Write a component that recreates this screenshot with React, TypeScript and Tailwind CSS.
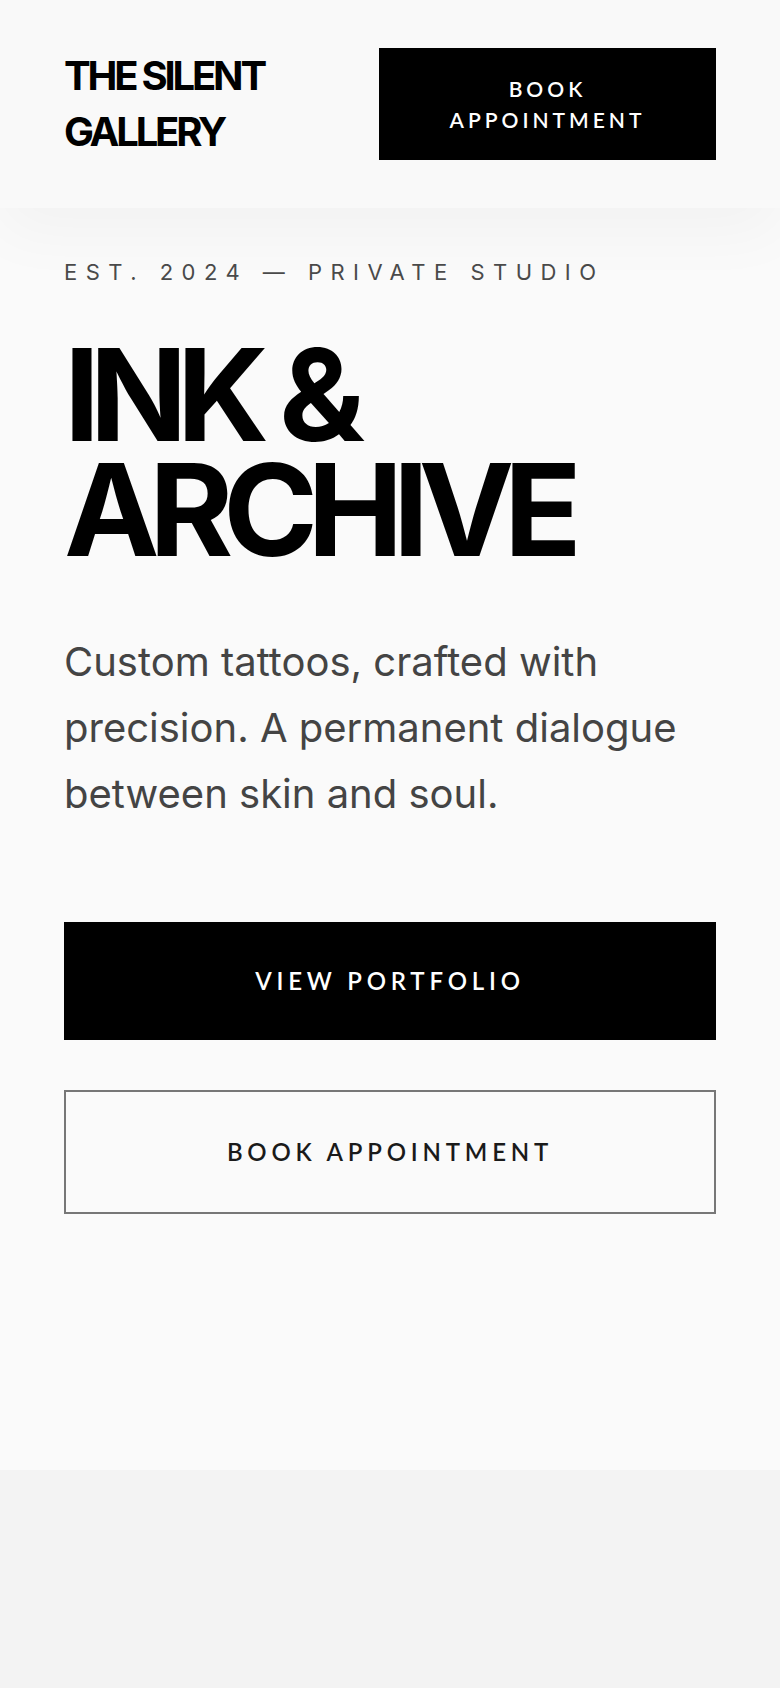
import React from 'react';

const sans = "font-['Inter','Noto_Sans',sans-serif]";
const btn = "font-['Lato','Open_Sans',sans-serif]";

const Header: React.FC = () => {
  return (
    <header className="relative z-10 bg-[#f9f9f9] px-16 py-12 flex items-center justify-between gap-8 shadow-[0_24px_60px_rgba(0,0,0,0.035)]">
      <div className={`${sans} text-[40px] leading-[56px] font-bold tracking-[-0.08em] text-black`}>
        <span className="block">THE SILENT</span>
        <span className="block">GALLERY</span>
      </div>
      <button
        className={`${btn} w-[337px] shrink-0 bg-black text-white text-[21px] leading-[31px] font-semibold tracking-[0.19em] py-[25px] text-center`}
      >
        BOOK
        <br />
        APPOINTMENT
      </button>
    </header>
  );
};

const Hero: React.FC = () => {
  return (
    <section className="bg-[#fafafa] px-16 pt-12 pb-[256px]">
      <p className={`${sans} text-[22px] leading-[33px] tracking-[0.385em] text-[#4a4a4a]`}>
        EST. 2024 — PRIVATE STUDIO
      </p>
      <h1 className={`${sans} mt-12 text-[128px] leading-[0.9] font-bold tracking-[-0.08em] text-black`}>
        INK &amp;
        <br />
        ARCHIVE
      </h1>
      <p className={`${sans} mt-[62px] text-[40px] leading-[66px] text-[#444444] max-w-[640px]`}>
        Custom tattoos, crafted with precision. A permanent dialogue between skin and soul.
      </p>
      <div className="mt-[95px] flex flex-col gap-[50px]">
        <button
          className={`${btn} w-full bg-black text-white text-[24px] leading-[36px] font-semibold tracking-[0.2em] py-[41px]`}
        >
          VIEW PORTFOLIO
        </button>
        <button
          className={`${btn} w-full border-2 border-[#777777] text-[#1a1a1a] text-[24px] leading-[36px] font-semibold tracking-[0.2em] py-[42px]`}
        >
          BOOK APPOINTMENT
        </button>
      </div>
    </section>
  );
};

export default function App() {
  return (
    <div className="min-h-screen bg-[#f3f3f3]">
      <Header />
      <Hero />
    </div>
  );
}
